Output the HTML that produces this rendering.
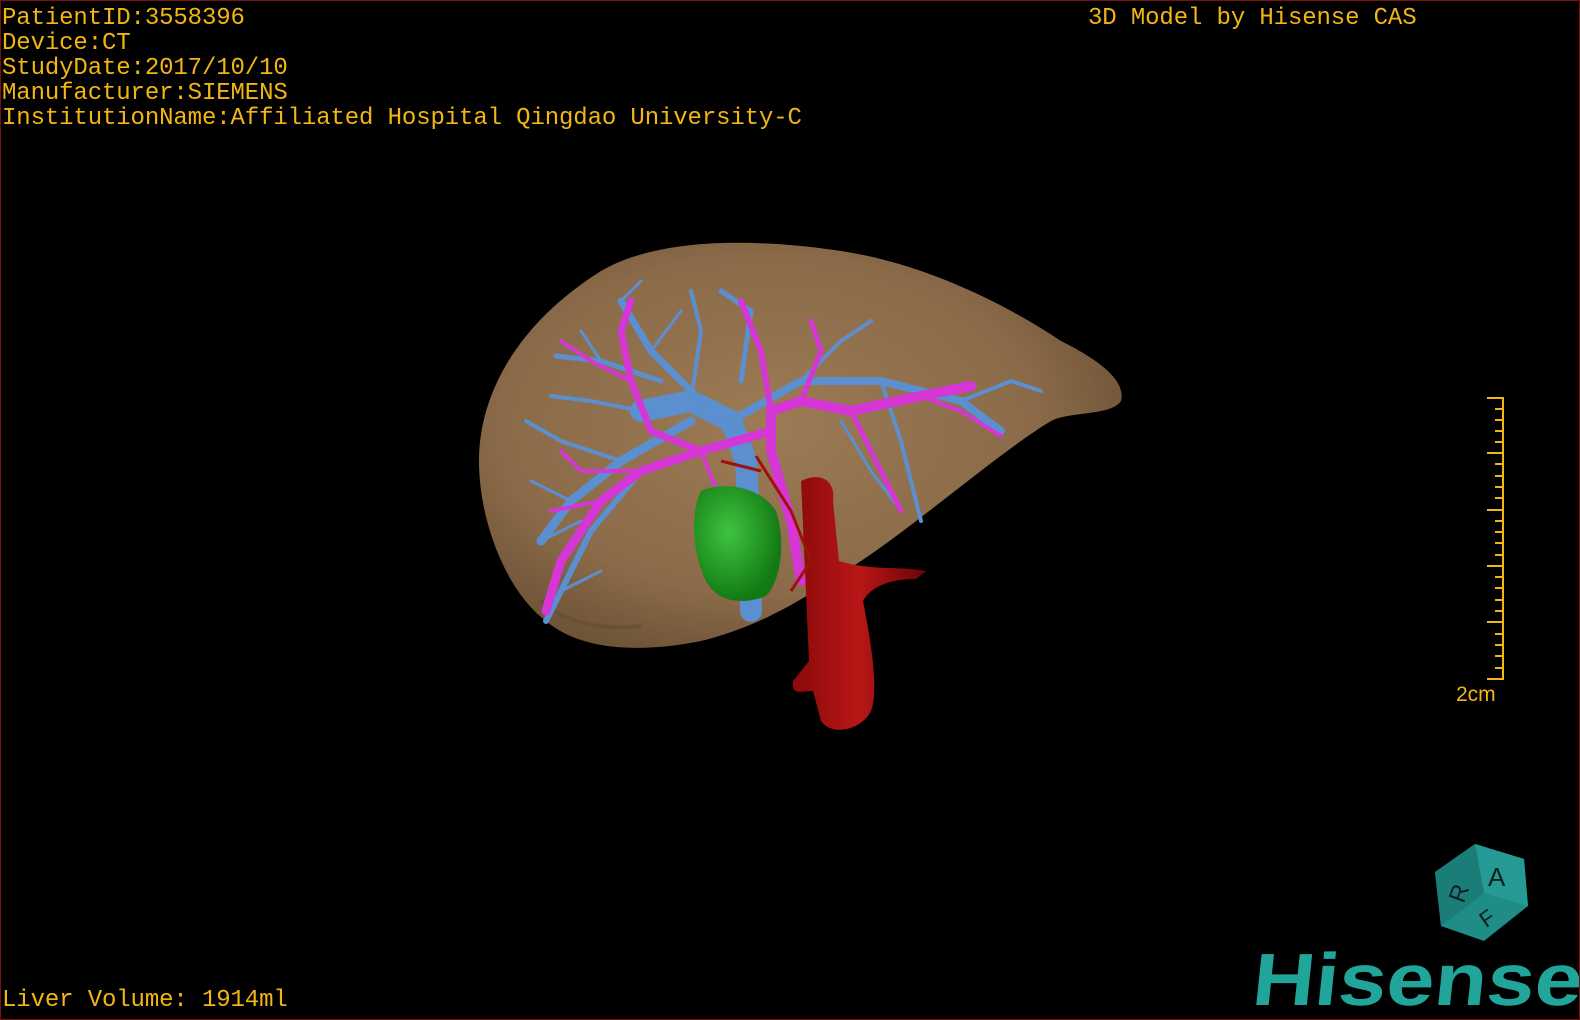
<!DOCTYPE html>
<html><head><meta charset="utf-8"><style>
html,body{margin:0;padding:0;background:#000;}
#w{position:relative;width:1580px;height:1020px;overflow:hidden;background:#000;box-sizing:border-box;border:1px solid #7a1010;}
.t{position:absolute;font-family:"Liberation Mono",monospace;font-size:24px;color:#f2b514;line-height:25px;white-space:pre;letter-spacing:-0.12px;}
</style></head><body><div id="w">
<svg width="1580" height="1020" style="position:absolute;left:0;top:0">
<defs>
<radialGradient id="lv" cx="0.45" cy="0.45" r="0.6"><stop offset="0" stop-color="#9c7b55"/><stop offset="0.7" stop-color="#8a6a48"/><stop offset="1" stop-color="#6e5338"/></radialGradient>
<radialGradient id="gb" cx="0.4" cy="0.4" r="0.6"><stop offset="0" stop-color="#3fc43f"/><stop offset="1" stop-color="#137a13"/></radialGradient>
<linearGradient id="ao" x1="0" x2="1"><stop offset="0" stop-color="#8a0a0a"/><stop offset="0.5" stop-color="#b81616"/><stop offset="1" stop-color="#6a0505"/></linearGradient>
</defs>
<path d="M600,270 C660,235 760,238 840,250 C920,262 1000,300 1060,340 C1100,360 1125,380 1120,400 C1110,415 1070,410 1050,420 C1000,450 920,520 860,560 C800,600 760,625 700,640 C640,652 580,650 545,620 C505,590 478,520 478,460 C478,390 520,320 600,270 Z" fill="url(#lv)"/>
<path d="M540,600 C560,620 600,630 640,625" stroke="#6a5035" stroke-width="4" fill="none"/>
<g stroke="#5b8fd0" fill="none" stroke-linecap="round">
<path d="M750,610 L748,520 L745,460 L730,420 L690,400 L640,410" stroke-width="22"/>
<path d="M700,400 L650,350 L620,300" stroke-width="7"/>
<path d="M730,420 L800,380 L880,380 L960,400 L1000,430" stroke-width="8"/>
<path d="M690,420 L620,460 L570,500 L540,540" stroke-width="9"/>
<path d="M640,470 L590,530 L560,590 L545,620" stroke-width="6"/>
<path d="M660,380 L600,360 L555,355" stroke-width="5"/>
<path d="M740,380 L750,310 L720,290" stroke-width="5"/>
<path d="M800,380 L840,340 L870,320" stroke-width="4"/>
<path d="M880,380 L900,440 L920,520" stroke-width="4"/>
<path d="M960,400 L1010,380 L1040,390" stroke-width="4"/>
<path d="M620,460 L560,440 L525,420" stroke-width="4"/>
<path d="M570,500 L530,480" stroke-width="3"/>
<path d="M640,410 L590,400 L550,395" stroke-width="4"/>
<path d="M690,400 L700,330 L690,290" stroke-width="4"/>
<path d="M840,420 L870,470 L900,510" stroke-width="3"/>
<path d="M620,300 L640,280 M650,350 L680,310 M600,360 L580,330 M560,590 L600,570 M540,540 L580,520" stroke-width="3"/>
</g>
<g stroke="#d636d6" fill="none" stroke-linecap="round">
<path d="M800,580 L790,520 L770,450 L770,410 L800,400 L850,410 L920,395 L970,385" stroke-width="10"/>
<path d="M770,430 L700,450 L640,470 L600,500 L560,560 L545,610" stroke-width="9"/>
<path d="M700,450 L650,430 L630,380 L620,330 L630,300" stroke-width="7"/>
<path d="M770,410 L760,350 L740,300" stroke-width="6"/>
<path d="M800,400 L820,350 L810,320" stroke-width="5"/>
<path d="M850,410 L870,450 L900,510" stroke-width="5"/>
<path d="M920,395 L960,410 L1000,435" stroke-width="4"/>
<path d="M640,470 L580,470 L560,450" stroke-width="4"/>
<path d="M630,380 L590,360 L560,340" stroke-width="4"/>
<path d="M600,500 L550,510" stroke-width="4"/>
<path d="M700,450 L720,500" stroke-width="4"/>
</g>
<path d="M800,480 C820,470 835,480 832,500 L838,560 C870,570 900,565 925,570 L915,578 C890,578 870,585 862,600 C870,640 878,690 870,710 C860,730 830,735 820,720 L812,690 C800,690 790,695 792,680 L808,660 Z" fill="url(#ao)"/>
<path d="M700,490 C720,480 760,485 775,510 C785,540 780,580 765,595 C740,605 715,600 705,580 C690,550 690,510 700,490 Z" fill="url(#gb)"/>
<path d="M755,455 L790,510 L810,560 L790,590 M720,460 L760,470" stroke="#a01010" stroke-width="3" fill="none"/>
</svg>
<div class="t" style="left:1px;top:5px">PatientID:3558396
Device:CT
StudyDate:2017/10/10
Manufacturer:SIEMENS
InstitutionName:Affiliated Hospital Qingdao University-C</div>
<div class="t" style="left:1087px;top:5px">3D Model by Hisense CAS</div>
<div class="t" style="left:1px;top:987px">Liver Volume: 1914ml</div>
<svg width="1580" height="1020" style="position:absolute;left:0;top:0">
<g stroke="#f2b514" stroke-width="2">
<line x1="1502" y1="396" x2="1502" y2="679"/>
<line x1="1486" y1="397" x2="1502" y2="397"/><line x1="1486" y1="452" x2="1502" y2="452"/><line x1="1486" y1="509" x2="1502" y2="509"/><line x1="1486" y1="565" x2="1502" y2="565"/><line x1="1486" y1="621" x2="1502" y2="621"/><line x1="1486" y1="678" x2="1502" y2="678"/>
<path d="M1494,408H1502M1494,419H1502M1494,430H1502M1494,441H1502M1494,463H1502M1494,475H1502M1494,486H1502M1494,497H1502M1494,520H1502M1494,531H1502M1494,542H1502M1494,554H1502M1494,576H1502M1494,587H1502M1494,599H1502M1494,610H1502M1494,633H1502M1494,644H1502M1494,655H1502M1494,667H1502"/>
</g>
<text x="1455" y="700" font-family="Liberation Sans,sans-serif" font-size="21" fill="#f2b514">2cm</text>
<polygon points="1434,871 1474,843 1523,858 1527,905 1483,940 1440,925" fill="#1f8c86"/>
<polygon points="1474,843 1523,858 1527,905 1483,892" fill="#259a94"/>
<polygon points="1434,871 1474,843 1483,892 1440,925" fill="#1b7d78"/>
<text x="1487" y="885" font-family="Liberation Sans,sans-serif" font-size="26" fill="#102020">A</text>
<text x="1450" y="905" font-family="Liberation Sans,sans-serif" font-size="24" fill="#102020" transform="rotate(-70 1455 895)">R</text>
<text x="1478" y="925" font-family="Liberation Sans,sans-serif" font-size="22" fill="#102020" transform="rotate(-35 1485 915)">F</text>
<text x="1250" y="1004" font-family="Liberation Sans,sans-serif" font-weight="bold" font-size="74" fill="#21a49a" textLength="330" lengthAdjust="spacingAndGlyphs" transform="skewX(-6) translate(105,0)">Hisense</text>
</svg>
</div></body></html>
